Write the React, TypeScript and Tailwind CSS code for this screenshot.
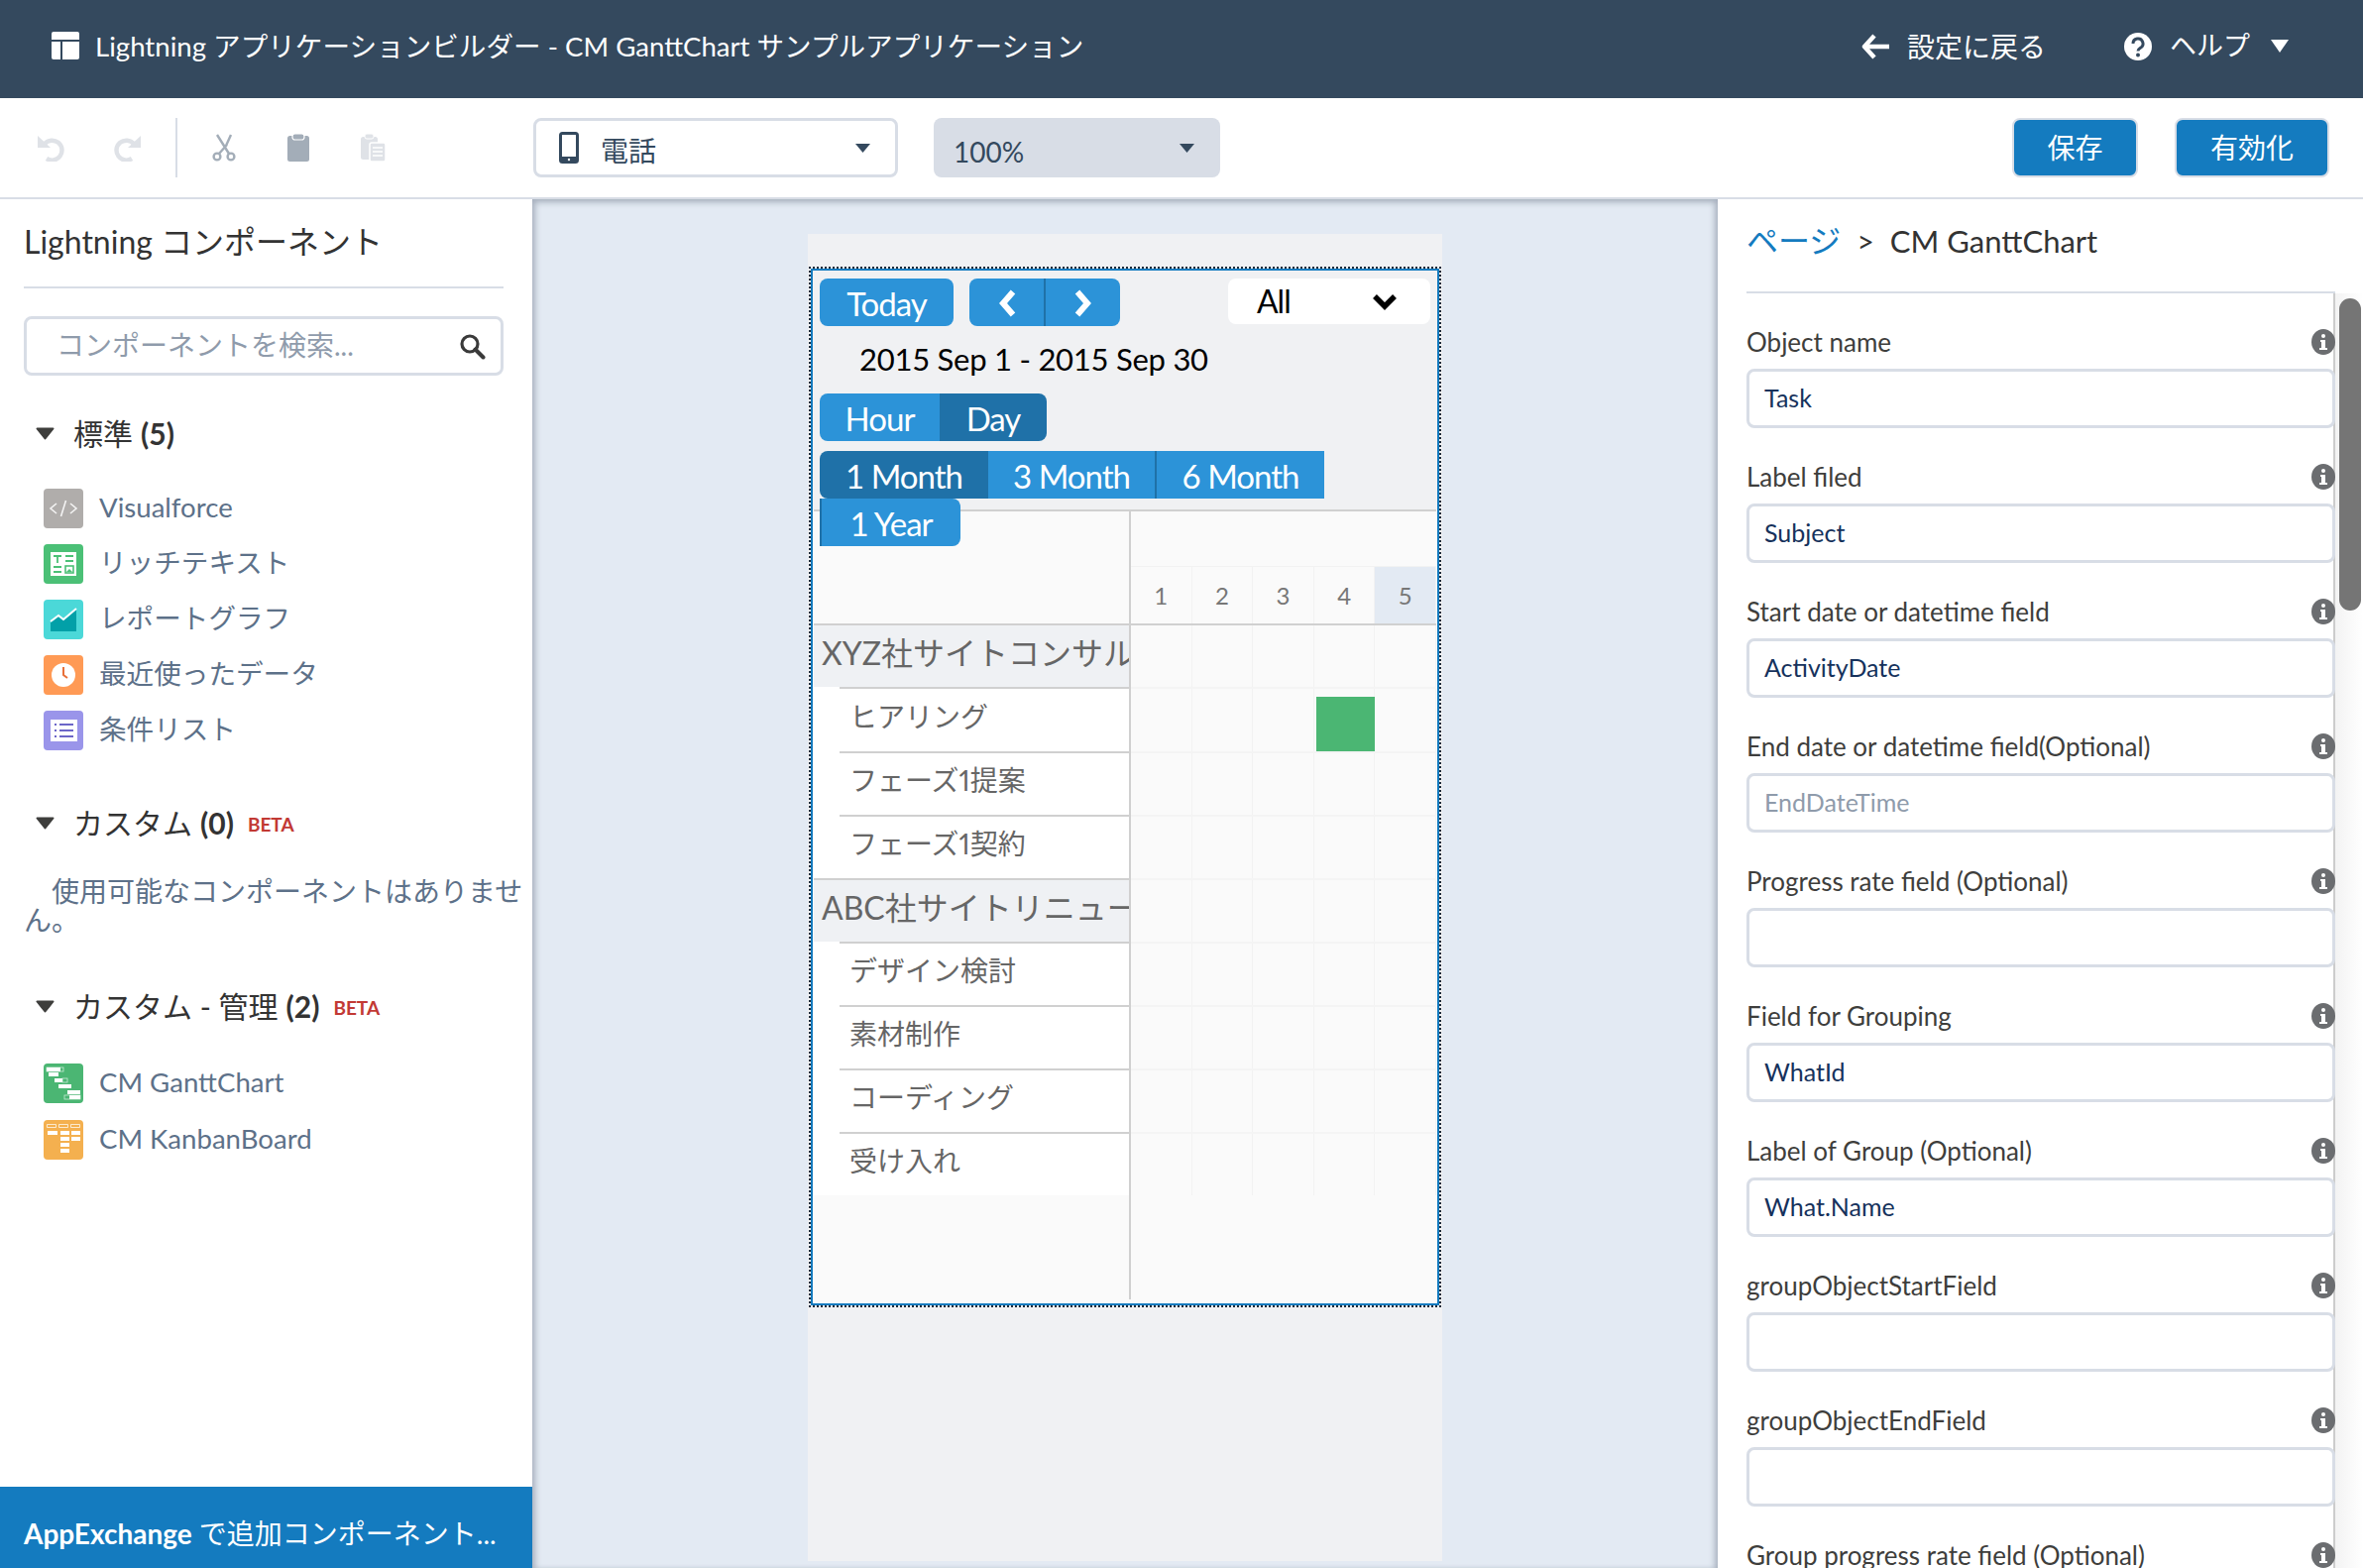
import type { ReactNode } from 'react'

const FIELDS = [
  { label: 'Object name', value: 'Task' },
  { label: 'Label filed', value: 'Subject' },
  { label: 'Start date or datetime field', value: 'ActivityDate' },
  { label: 'End date or datetime field(Optional)', placeholder: 'EndDateTime' },
  { label: 'Progress rate field (Optional)' },
  { label: 'Field for Grouping', value: 'WhatId' },
  { label: 'Label of Group (Optional)', value: 'What.Name' },
  { label: 'groupObjectStartField' },
  { label: 'groupObjectEndField' },
  { label: 'Group progress rate field (Optional)' },
]

const ROWS = [
  { name: 'XYZ社サイトコンサル', group: true, h: 'h-[64px]' },
  { name: 'ヒアリング', bar: true, h: 'h-[65px]' },
  { name: 'フェーズ1提案', h: 'h-[64px]' },
  { name: 'フェーズ1契約', h: 'h-[64px]' },
  { name: 'ABC社サイトリニューアル', group: true, h: 'h-[64px]' },
  { name: 'デザイン検討', h: 'h-[64px]' },
  { name: '素材制作', h: 'h-[64px]' },
  { name: 'コーディング', h: 'h-[64px]' },
  { name: '受け入れ', h: 'h-[64px]' },
]

function Tile({ bg, children }: { bg: string; children: ReactNode }) {
  return (
    <svg width="40" height="40" viewBox="0 0 40 40" className="shrink-0">
      <rect width="40" height="40" rx="4" fill={bg} />
      {children}
    </svg>
  )
}

const ICONS = {
  vf: (
    <Tile bg="#b0adab">
      <path d="M13 15l-6 5 6 5M27 15l6 5-6 5M22.500 12l-5 16" fill="none" stroke="#fff" strokeWidth="1.600" opacity="0.85" />
    </Tile>
  ),
  rich: (
    <Tile bg="#4bc076">
      <rect x="7" y="8" width="26" height="24" fill="#fff" />
      <path d="M10 12h8M14 12v7M22 12h8M22 17h8M10 23h8M10 28h8" stroke="#4bc076" strokeWidth="1.800" fill="none" />
      <rect x="22" y="22" width="8" height="7" fill="none" stroke="#4bc076" strokeWidth="1.600" />
      <path d="M23 28l3-3 3 3z" fill="#4bc076" />
    </Tile>
  ),
  chart: (
    <Tile bg="#4bd8d8">
      <path d="M7 23l8-6 5 4 13-11v22H7z" fill="#02a0a8" />
      <path d="M7 22l8-6 5 4 13-11" fill="none" stroke="#fff" strokeWidth="2" />
    </Tile>
  ),
  clock: (
    <Tile bg="#ff9a55">
      <circle cx="20" cy="20" r="12" fill="#fff" />
      <path d="M20 12v8l4 3" fill="none" stroke="#e8703a" strokeWidth="2" />
    </Tile>
  ),
  list: (
    <Tile bg="#9a95ea">
      <rect x="7" y="9" width="27" height="22" fill="#fff" />
      <path d="M16 14h14M16 20h14M16 26h14" stroke="#6c66c8" strokeWidth="2.200" />
      <path d="M11 14h2M11 20h2M11 26h2" stroke="#6c66c8" strokeWidth="2.200" />
    </Tile>
  ),
  gantt: (
    <Tile bg="#4bb673">
      <rect x="3" y="4" width="14" height="4" fill="#fff" />
      <rect x="3" y="4" width="17" height="4" fill="none" stroke="#fff" strokeWidth="0.800" opacity="0.7" />
      <rect x="5" y="9" width="10" height="4" fill="#fff" />
      <rect x="11" y="15" width="8" height="4" fill="#fff" />
      <rect x="19" y="15" width="5" height="4" fill="none" stroke="#fff" strokeWidth="0.800" opacity="0.7" />
      <rect x="15" y="21" width="13" height="4" fill="#fff" />
      <rect x="24" y="27" width="13" height="4" fill="#fff" />
      <rect x="21" y="32" width="16" height="4" fill="none" stroke="#fff" strokeWidth="0.800" opacity="0.7" />
      <rect x="26" y="32" width="11" height="4" fill="#fff" />
    </Tile>
  ),
  kanban: (
    <Tile bg="#f4b04f">
      <path d="M3.500 4.500h9v3h-9zM15.500 4.500h9v3h-9zM27.500 4.500h9v3h-9z" fill="none" stroke="#fff" strokeWidth="0.900" opacity="0.8" />
      <path d="M4 11h10v4H4zM17 11h9v4h-9zM28 11h9v4h-9zM17 17h9v4h-9zM28 17h9v4h-9zM17 23h9v4h-9zM17 29h9v4h-9z" fill="#fff" />
    </Tile>
  ),
}

function Caret() {
  return (
    <svg width="19" height="13" viewBox="0 0 19 13" className="shrink-0">
      <path d="M1.500 1.500h16L9.500 11.500z" fill="#3e3e3c" stroke="#3e3e3c" strokeWidth="2" strokeLinejoin="round" />
    </svg>
  )
}

function SectionHead({ name, count, beta }: { name: string; count: number; beta?: boolean }) {
  return (
    <div className="flex h-[40px] items-center pl-[36px] text-[30px] text-[#333]">
      <Caret />
      <span className="ml-[19px]">{name}</span>
      <span className="ml-[8px] font-bold">({count})</span>
      {beta && <span className="ml-[14px] pt-[4px] text-[19px] font-bold text-[#c23934]">BETA</span>}
    </div>
  )
}

function CompItem({ icon, label }: { icon: ReactNode; label: string }) {
  return (
    <div className="flex h-[40px] items-center gap-[16px] pl-[44px] text-[27.600px] text-[#5d7189]">
      {icon}
      <span className="pb-[2px]">{label}</span>
    </div>
  )
}

function Sidebar() {
  return (
    <aside className="flex w-[537px] shrink-0 flex-col bg-white">
      <div className="flex h-[88px] items-center pb-[2px] pl-[24px] text-[32px] text-[#333]">Lightning コンポーネント</div>
      <div className="mx-[24px] h-[2px] w-[484px] bg-[#d8dde6]" />
      <div className="mx-[24px] mt-[28px] flex h-[60px] w-[484px] items-center justify-between rounded-[8px] border-[3px] border-[#d8dde6] pl-[30px] pr-[15px] text-[28px] text-[#8f9bab]">
        <span className="pb-[3px]">コンポーネントを検索...</span>
        <svg width="27" height="27" viewBox="0 0 27 27">
          <circle cx="11" cy="11" r="8" fill="none" stroke="#3a3a3a" strokeWidth="3.200" />
          <path d="M16.500 16.500l8 8" stroke="#3a3a3a" strokeWidth="4" strokeLinecap="round" />
        </svg>
      </div>

      <div className="mt-[38px]">
        <SectionHead name="標準" count={5} />
      </div>
      <div className="mt-[36px] flex flex-col gap-[16px]">
        <CompItem icon={ICONS.vf} label="Visualforce" />
        <CompItem icon={ICONS.rich} label="リッチテキスト" />
        <CompItem icon={ICONS.chart} label="レポートグラフ" />
        <CompItem icon={ICONS.clock} label="最近使ったデータ" />
        <CompItem icon={ICONS.list} label="条件リスト" />
      </div>

      <div className="mt-[53px]">
        <SectionHead name="カスタム" count={0} beta />
      </div>
      <p className="ml-[24px] mt-[35px] w-[506px] indent-[28px] text-[28px] leading-[29px] text-[#5d7189]">
        使用可能なコンポーネントはありません。
      </p>

      <div className="mt-[52px]">
        <SectionHead name="カスタム - 管理" count={2} beta />
      </div>
      <div className="mt-[38px] flex flex-col gap-[17px]">
        <CompItem icon={ICONS.gantt} label="CM GanttChart" />
        <CompItem icon={ICONS.kanban} label="CM KanbanBoard" />
      </div>

      <div className="mt-auto flex h-[82px] items-center bg-[#147bbf] pl-[24px] pt-[12px] text-[28px] text-white">
        <span className="font-bold">AppExchange</span>&nbsp;で追加コンポーネント...
      </div>
    </aside>
  )
}

function Toolbar() {
  return (
    <div className="flex h-[102px] shrink-0 items-center border-b-2 border-[#d8dde6] bg-white">
      <div className="flex w-[177px] shrink-0 items-center gap-[50px] pl-[38px]">
        <svg width="27" height="27" viewBox="0 0 27 27">
          <path d="M7 9A10 10 0 1 1 9 24" fill="none" stroke="#dfe2e7" strokeWidth="4.500" />
          <path d="M0 1v12h13z" fill="#dfe2e7" />
        </svg>
        <svg width="27" height="27" viewBox="0 0 27 27">
          <path d="M20 9A10 10 0 1 0 18 24" fill="none" stroke="#dfe2e7" strokeWidth="4.500" />
          <path d="M27 1v12H14z" fill="#dfe2e7" />
        </svg>
      </div>
      <div className="h-[60px] w-[2px] shrink-0 bg-[#d8dde6]" />
      <div className="flex w-[359px] shrink-0 items-center gap-[52px] pl-[35px]">
        <svg width="24" height="28" viewBox="0 0 24 28">
          <circle cx="5" cy="23" r="3.400" fill="none" stroke="#a3adb8" strokeWidth="2.400" />
          <circle cx="19" cy="23" r="3.400" fill="none" stroke="#a3adb8" strokeWidth="2.400" />
          <path d="M7 20L15 11M17 20L5 1M14 12L19 1" fill="none" stroke="#a3adb8" strokeWidth="2.400" />
        </svg>
        <svg width="22" height="28" viewBox="0 0 22 28">
          <rect y="2" width="22" height="26" rx="2.500" fill="#a3adb8" />
          <rect x="5" y="0" width="12" height="6" rx="2.500" fill="#a3adb8" stroke="#fff" strokeWidth="1.200" />
        </svg>
        <svg width="25" height="28" viewBox="0 0 25 28">
          <rect y="3" width="17" height="23" rx="2.500" fill="#dfe2e7" />
          <rect x="4" y="0" width="9" height="5" rx="2" fill="#dfe2e7" stroke="#fff" strokeWidth="1" />
          <rect x="9" y="9" width="16" height="19" rx="2" fill="#dfe2e7" stroke="#fff" strokeWidth="1.500" />
          <path d="M12 14h10M12 18h10M12 22h10" stroke="#fff" strokeWidth="1.500" />
        </svg>
      </div>
      <div className="flex h-[60px] w-[368px] shrink-0 items-center rounded-[8px] border-[3px] border-[#d8dde6] pl-[23px] pr-[24px] text-[28px] text-[#34495e]">
        <svg width="20" height="32" viewBox="0 0 20 32">
          <rect x="1.500" y="1.500" width="17" height="29" rx="2" fill="none" stroke="#34495e" strokeWidth="3" />
          <rect x="1" y="25" width="18" height="6" fill="#34495e" />
          <circle cx="10" cy="28" r="1.200" fill="#fff" />
        </svg>
        <span className="ml-[22px] flex-1 pt-[6px]">電話</span>
        <svg width="17" height="11" viewBox="0 0 17 11">
          <path d="M1 1h15L8.500 10z" fill="#34495e" />
        </svg>
      </div>
      <div className="ml-[36px] flex h-[60px] w-[289px] shrink-0 items-center justify-between rounded-[8px] bg-[#d8dde6] pl-[20px] pr-[25px] text-[28px] text-[#34495e]">
        <span className="pt-[7px]">100%</span>
        <svg width="17" height="11" viewBox="0 0 17 11">
          <path d="M1 1h15L8.500 10z" fill="#34495e" />
        </svg>
      </div>
      <div className="ml-auto flex items-center gap-[37px] pr-[34px]">
        <button className="flex h-[60px] w-[127px] items-center justify-center rounded-[8px] border-2 border-[#d8dde6] bg-[#147bbf] text-[28px] text-white">
          保存
        </button>
        <button className="flex h-[60px] w-[156px] items-center justify-center rounded-[8px] border-2 border-[#d8dde6] bg-[#147bbf] text-[28px] text-white">
          有効化
        </button>
      </div>
    </div>
  )
}

function GanttButton({ dark, className, children }: { dark?: boolean; className: string; children: ReactNode }) {
  return (
    <div
      className={`flex h-[48px] items-center justify-center pt-[3px] text-[33px] tracking-[-1px] text-white ${
        dark ? 'bg-[#1f71a8]' : 'bg-[#2c93d8]'
      } ${className}`}
    >
      {children}
    </div>
  )
}

function GanttToolbar() {
  return (
    <div className="relative z-10 h-[241px] shrink-0 pl-[7px] pr-[7px] pt-[8px]">
      <div className="flex items-start">
        <GanttButton className="w-[135px] rounded-[8px]">Today</GanttButton>
        <div className="ml-[16px] flex h-[48px] w-[152px] rounded-[8px] bg-[#2c93d8]">
          <div className="flex flex-1 items-center justify-center border-r-2 border-[#1f71a8] pt-[2px]">
            <svg width="22" height="30" viewBox="0 0 22 30">
              <path d="M17 3.500L7 15l10 11.500" fill="none" stroke="#fff" strokeWidth="6" />
            </svg>
          </div>
          <div className="flex flex-1 items-center justify-center pt-[2px]">
            <svg width="22" height="30" viewBox="0 0 22 30">
              <path d="M5 3.500L15 15 5 26.500" fill="none" stroke="#fff" strokeWidth="6" />
            </svg>
          </div>
        </div>
        <div className="ml-auto flex h-[46px] w-[204px] items-center justify-between rounded-[8px] bg-white pl-[29px] pr-[33px] text-[32px] tracking-[-1px] text-black">
          <span>All</span>
          <svg width="26" height="18" viewBox="0 0 26 18">
            <path d="M3 4l10 10L23 4" fill="none" stroke="#000" strokeWidth="5.500" />
          </svg>
        </div>
      </div>
      <div className="mt-[9px] flex h-[48px] items-center pl-[40px] text-[31px] tracking-[-0.25px] text-black">2015 Sep 1 - 2015 Sep 30</div>
      <div className="mt-[11px] flex">
        <GanttButton className="w-[121px] rounded-l-[8px]">Hour</GanttButton>
        <GanttButton dark className="w-[108px] rounded-r-[8px]">
          Day
        </GanttButton>
      </div>
      <div className="mt-[10px] flex">
        <GanttButton dark className="w-[170px] rounded-l-[8px]">
          1 Month
        </GanttButton>
        <GanttButton className="w-[170px] border-r-2 border-[#1f71a8]">3 Month</GanttButton>
        <GanttButton className="w-[169px]">6 Month</GanttButton>
      </div>
      <GanttButton className="w-[142px] rounded-r-[8px] border-l-2 border-[#1f71a8]">1 Year</GanttButton>
    </div>
  )
}

function GanttChart() {
  return (
    <div className="flex flex-1 flex-col overflow-hidden bg-[#fafafa] px-px pb-[4px]">
      <div className="flex flex-1 border-t-2 border-[#d0d0d0]">
        <div className="w-[318px] shrink-0 overflow-hidden">
          <div className="h-[113px]" />
          {ROWS.map((r) =>
            r.group ? (
              <div
                key={r.name}
                className={`flex items-center overflow-hidden whitespace-nowrap border-t-2 border-[#d0d0d0] bg-[#eff1f4] pb-[6px] pl-[8px] text-[32px] text-[#666] ${r.h}`}
              >
                {r.name}
              </div>
            ) : (
              <div key={r.name} className={`bg-white pl-[26px] ${r.h}`}>
                <div className="flex h-full items-center border-t-2 border-[#d0d0d0] pb-[8px] pl-[10px] text-[28px] text-[#666] [font-variant-numeric:proportional-nums]">
                  {r.name}
                </div>
              </div>
            ),
          )}
        </div>
        <div className="flex-1 border-l-2 border-[#d0d0d0]">
          <div className="h-[56px] border-b border-[#f2f2f2]" />
          <div className="grid h-[57px] grid-cols-5 text-[24px] text-[#777]">
            {[1, 2, 3, 4, 5].map((d) => (
              <div key={d} className={`flex items-center justify-center border-r border-[#f2f2f2] ${d === 5 ? 'bg-[#e3eaf3]' : ''}`}>
                {d}
              </div>
            ))}
          </div>
          {ROWS.map((r, i) => (
            <div key={r.name} className={`grid grid-cols-5 border-t-2 ${i === 0 ? 'border-[#d0d0d0]' : 'border-[#f4f4f4]'} ${r.h}`}>
              {[1, 2, 3, 4, 5].map((d) => (
                <div key={d} className="pt-[8px] [box-shadow:inset_-1px_0_0_#f2f2f2]">
                  {r.bar && d === 4 && <div className="ml-[2px] h-full bg-[#4bb673]" />}
                </div>
              ))}
            </div>
          ))}
        </div>
      </div>
    </div>
  )
}

function Canvas() {
  return (
    <main className="min-w-0 flex-1 bg-[#e3eaf3] pl-[278px] pt-[35px] shadow-[inset_6px_0_6px_-3px_#a9b2bf,inset_-6px_0_6px_-3px_#a9b2bf,inset_0_6px_6px_-3px_#a9b2bf]">
      <div className="h-[1339px] w-[640px] bg-[#f0f1f3] px-px pt-[33px]">
        <div className="h-[1050px] border-2 border-dotted border-[#1c2b3a]">
          <div className="flex h-full flex-col border-2 border-[#147bbf] bg-[#f0f1f3]">
            <GanttToolbar />
            <GanttChart />
          </div>
        </div>
      </div>
    </main>
  )
}

function InfoIcon() {
  return (
    <svg width="24" height="26" viewBox="0 0 24 26" className="relative z-10 -mr-[2px] shrink-0">
      <ellipse cx="12" cy="13" rx="12" ry="13" fill="#6b6d70" />
      <circle cx="12" cy="7" r="2" fill="#fff" />
      <path d="M9 11h5v8h2v2H8v-2h2v-6H9z" fill="#fff" />
    </svg>
  )
}

function PropField({ label, value, placeholder }: { label: string; value?: string; placeholder?: string }) {
  return (
    <div className="h-[136px]">
      <div className="flex h-[28px] translate-y-[1px] items-center justify-between text-[26px] text-[#3e3e3c]">
        <span>{label}</span>
        <InfoIcon />
      </div>
      <div
        className={`mt-[14px] flex h-[60px] w-[594px] items-center rounded-[8px] border-[3px] border-[#d8dde6] bg-white pl-[15px] text-[25px] ${
          value ? 'text-[#16325c]' : 'text-[#8f9bab]'
        }`}
      >
        {value ?? placeholder}
      </div>
    </div>
  )
}

function PropsPanel() {
  return (
    <aside className="flex w-[651px] shrink-0 flex-col overflow-hidden bg-white">
      <div className="ml-[29px] flex h-[95px] w-[594px] shrink-0 items-center border-b-2 border-[#d8dde6] pb-[9px] text-[31px] text-[#333]">
        <span className="text-[32px] text-[#147bbf]">ページ</span>
        <span className="ml-[16px] text-[30px]">&gt;</span>
        <span className="ml-[16px]">CM GanttChart</span>
      </div>
      <div className="flex flex-1 overflow-hidden">
        <div className="ml-[29px] w-[594px] shrink-0 border-r-2 border-[#cccccc] pt-[34px]">
          {FIELDS.map((f) => (
            <PropField key={f.label} {...f} />
          ))}
        </div>
        <div className="flex-1 bg-gradient-to-r from-[#f3f3f3] to-white pl-[4px] pt-[5px]">
          <div className="h-[315px] w-[22px] rounded-full bg-[#757575]" />
        </div>
      </div>
    </aside>
  )
}

export default function App() {
  return (
    <div className="flex h-[1582px] w-[2384px] flex-col overflow-hidden bg-white [font-family:Lato,'Noto_Sans_CJK_JP',sans-serif]">
      <header className="flex h-[99px] shrink-0 items-center justify-between bg-[#34495e] pb-[6px] pl-[52px] pr-[74px] text-[28px] text-white">
        <div className="flex items-center gap-[16px]">
          <svg width="28" height="28" viewBox="0 0 28 28">
            <path d="M2 0h24a2 2 0 0 1 2 2v6H0V2a2 2 0 0 1 2-2zM0 10h9v18H2a2 2 0 0 1-2-2zM11 10h17v16a2 2 0 0 1-2 2H11z" fill="#fff" />
          </svg>
          <span className="text-[27.600px]">Lightning アプリケーションビルダー - CM GanttChart サンプルアプリケーション</span>
        </div>
        <div className="flex items-center">
          <svg width="28" height="28" viewBox="0 0 28 28">
            <path d="M13 3L3 14l10 11M4 14h24" fill="none" stroke="#fff" strokeWidth="4.500" strokeLinejoin="round" />
          </svg>
          <span className="ml-[18px]">設定に戻る</span>
          <svg width="28" height="28" viewBox="0 0 28 28" className="ml-[79px]">
            <circle cx="14" cy="14" r="14" fill="#fff" />
            <path d="M9 11a5 5 0 1 1 7.500 4.300c-1.600 1-2.500 1.700-2.500 3.200" fill="none" stroke="#34495e" strokeWidth="3" />
            <circle cx="14" cy="22.500" r="2" fill="#34495e" />
          </svg>
          <span className="ml-[18px] text-[27px]">ヘルプ</span>
          <svg width="20" height="15" viewBox="0 0 20 15" className="ml-[20px]">
            <path d="M1 1h18l-9 13z" fill="#fff" />
          </svg>
        </div>
      </header>
      <Toolbar />
      <div className="flex min-h-0 flex-1">
        <Sidebar />
        <Canvas />
        <PropsPanel />
      </div>
    </div>
  )
}
